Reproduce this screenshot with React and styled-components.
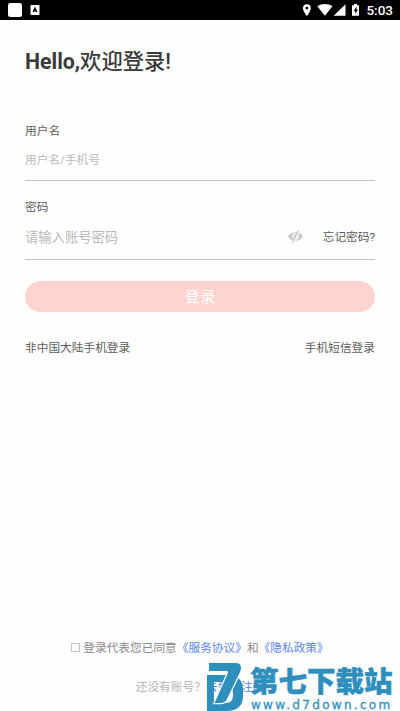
import React, { useState } from "react";
import styled, { createGlobalStyle } from "styled-components";

//////////// STYLED COMPONENTS /////////////
const GlobalStyle = createGlobalStyle`
  * {
    box-sizing: border-box;
  }
  body {
    margin: 0;
    background: #fefefe;
    font-family: Roboto, "Noto Sans CJK SC", sans-serif;
  }
`;

const Screen = styled.div`
  position: relative;
  display: flex;
  flex-direction: column;
  width: 400px;
  height: 711px;
  overflow: hidden;
`;

const StatusBar = styled.header`
  display: flex;
  align-items: center;
  justify-content: space-between;
  height: 20px;
  padding: 0 7px 0 8px;
  background: #000;
  color: #fff;
`;

const StatusGroup = styled.div`
  display: flex;
  align-items: center;
  svg {
    display: block;
  }
`;

const Clock = styled.span`
  margin-left: 5px;
  font-size: 13.5px;
  font-weight: 500;
  line-height: 20px;
`;

const Main = styled.main`
  display: flex;
  flex-direction: column;
  padding: 26px 25px 0;
`;

const Title = styled.h1`
  margin: 0;
  height: 32px;
  font-size: 21.3px;
  font-weight: 500;
  line-height: 32px;
  color: #3a3a3a;
  white-space: nowrap;
`;

const Hello = styled.span`
  font-weight: 700;
`;

const Field = styled.label`
  display: flex;
  flex-direction: column;
  height: ${(p) => p.$height};
  margin-top: ${(p) => p.$top};
  border-bottom: 1px solid #c2c2c2;
`;

const Label = styled.span`
  font-size: 11.7px;
  line-height: 18px;
  color: #5c5c5c;
`;

const InputRow = styled.div`
  display: flex;
  align-items: center;
  height: 20px;
  margin-top: ${(p) => p.$top};
`;

const Input = styled.input`
  flex: 1;
  min-width: 0;
  height: 20px;
  padding: 0;
  border: 0;
  outline: 0;
  background: transparent;
  font-family: inherit;
  font-size: ${(p) => p.$size};
  color: #555;
  &::placeholder {
    color: #bababa;
    opacity: 1;
  }
`;

const EyeButton = styled.button`
  display: flex;
  margin: 0 20px 0 0;
  padding: 0;
  border: 0;
  background: none;
`;

const TextLink = styled.a`
  font-size: 11.7px;
  line-height: 18px;
  color: #5c5c5c;
  white-space: nowrap;
`;

const LoginButton = styled.button`
  height: 31px;
  margin-top: 21px;
  padding: 0;
  border: 0;
  border-radius: 16px;
  background: #ffd3d0;
  font-family: inherit;
  font-size: 15.2px;
  line-height: 30px;
  color: #fff;
`;

const LinkRow = styled.div`
  display: flex;
  justify-content: space-between;
  margin-top: 27px;
`;

const Footer = styled.footer`
  display: flex;
  flex-direction: column;
  align-items: center;
  margin-top: auto;
  padding-bottom: 15px;
`;

const Agreement = styled.label`
  display: flex;
  align-items: center;
  font-size: 11.7px;
  line-height: 18px;
  color: #888;
  white-space: nowrap;
`;

const CheckBox = styled.input`
  appearance: none;
  width: 9px;
  height: 9px;
  margin: 0 3px 1px 0;
  border: 1px solid #c2c2c2;
`;

const Blue = styled.a`
  color: #5b85ee;
`;

const Register = styled.p`
  margin: 21px 0 0;
  font-size: 11.7px;
  line-height: 18px;
  color: #b5b5b5;
  white-space: nowrap;
`;

// stamp that lies over the lower right corner
const Stamp = styled.div`
  position: absolute;
  right: 5px;
  bottom: 0;
  display: flex;
  color: #2e8fbd;
`;

const StampText = styled.div`
  display: flex;
  flex-direction: column;
  width: 145px;
  padding-top: 6px;
  margin-left: 6px;
`;

const StampName = styled.span`
  height: 33px;
  font-size: 28.5px;
  font-weight: 900;
  line-height: 33px;
  -webkit-text-stroke: 0.5px #2e8fbd;
  white-space: nowrap;
`;

const StampUrl = styled.span`
  padding-left: 1px;
  font-family: "DejaVu Sans", sans-serif;
  font-size: 12px;
  line-height: 12px;
  letter-spacing: 2.3px;
  -webkit-text-stroke: 0.3px #2e8fbd;
  white-space: nowrap;
`;
//////////// END STYLED COMPONENTS /////////////

//////////// ICONS /////////////
const AppIcons = () => (
  <svg width="34" height="20" viewBox="0 0 34 20">
    <rect x="0" y="3" width="14" height="14" rx="2.5" fill="#fff" />
    <rect x="22.5" y="5" width="9" height="10" rx="0.7" fill="#fff" />
    <path d="M25.2 12 27 8 28.8 12M25.8 10.9h2.4" fill="none" stroke="#000" strokeWidth="1.2" />
  </svg>
);

const SystemIcons = () => (
  <svg width="59" height="20" viewBox="302 0 59 20" fill="#fff">
    <path
      fillRule="evenodd"
      d="M306.9 4.3a3.9 3.9 0 0 0-3.9 3.9c0 2.8 3.9 7.9 3.9 7.9s3.9-5.1 3.9-7.9a3.9 3.9 0 0 0-3.9-3.9Zm0 2.4a1.4 1.4 0 1 1 0 2.8 1.4 1.4 0 0 1 0-2.8Z"
    />
    <path d="M317.3 6.3c4.4-3 10.8-3 15.2 0l-7.6 9.4Z" />
    <path d="M345.5 4.3v11.4h-11.9Z" />
    <path d="M354 4h3v1.2h2v10.6h-7V5.2h2Z" />
    <path d="m356.5 6.6-2.8 4.5h1.6v3l2.7-4.5h-1.5Z" fill="#000" />
  </svg>
);

const EyeOff = () => (
  <svg width="15" height="14" viewBox="0 0 15 14">
    <path d="M0 6.5C3.2.8 11.8.8 15 6.5 11.8 12.2 3.2 12.2 0 6.5Z" fill="#c6c6c6" />
    <circle cx="7.5" cy="6.5" r="3" fill="#e2e2e2" stroke="#fefefe" strokeWidth="1" />
    <path d="M11.3.7 5.5 12.9" stroke="#fefefe" strokeWidth="1.2" />
    <path d="M10.4.5 4.6 12.5" stroke="#c0c0c0" strokeWidth="1.2" />
  </svg>
);

const StampLogo = () => (
  <svg width="38" height="51" viewBox="0 0 38 51">
    <path
      fill="#2e8fbd"
      fillRule="evenodd"
      d="M1 15h25q11 3 11 14v7q0 15-17 15H1ZM8 22v21h12q7 0 7-8v-5q0-8-8-8Z"
    />
    <path
      fill="#2e8fbd"
      stroke="#fefefe"
      strokeWidth="2.4"
      paintOrder="stroke"
      d="M3 3h26.500q5.500 0 5.500 5 0 2-1 4L21 39q-2 4-6 4H8.500L22 13q.500-2-1.500-2H3Z"
    />
  </svg>
);
//////////// END ICONS /////////////

//////////// REACT COMPONENT /////////////
export default function App() {
  const [visible, setVisible] = useState(false);

  return (
    <Screen>
      <GlobalStyle />
      <StatusBar>
        <StatusGroup>
          <AppIcons />
        </StatusGroup>
        <StatusGroup>
          <SystemIcons />
          <Clock>5:03</Clock>
        </StatusGroup>
      </StatusBar>
      <Main>
        <Title>
          <Hello>Hello,</Hello>欢迎登录!
        </Title>
        <Field $height="59px" $top="44px">
          <Label>用户名</Label>
          <InputRow $top="10px">
            <Input $size="11.7px" placeholder="用户名/手机号" />
          </InputRow>
        </Field>
        <Field $height="62px" $top="17px">
          <Label>密码</Label>
          <InputRow $top="11px">
            <Input
              $size="13.3px"
              type={visible ? "text" : "password"}
              placeholder="请输入账号密码"
            />
            <EyeButton type="button" onClick={() => setVisible(!visible)}>
              <EyeOff />
            </EyeButton>
            <TextLink>忘记密码?</TextLink>
          </InputRow>
        </Field>
        <LoginButton>登录</LoginButton>
        <LinkRow>
          <TextLink>非中国大陆手机登录</TextLink>
          <TextLink>手机短信登录</TextLink>
        </LinkRow>
      </Main>
      <Footer>
        <Agreement>
          <CheckBox type="checkbox" />
          登录代表您已同意<Blue>《服务协议》</Blue>和<Blue>《隐私政策》</Blue>
        </Agreement>
        <Register>
          还没有账号？<Blue>去免费注册</Blue>
        </Register>
      </Footer>
      <Stamp>
        <StampLogo />
        <StampText>
          <StampName>第七下载站</StampName>
          <StampUrl>www.d7down.com</StampUrl>
        </StampText>
      </Stamp>
    </Screen>
  );
}
//////////// END REACT COMPONENT /////////////
